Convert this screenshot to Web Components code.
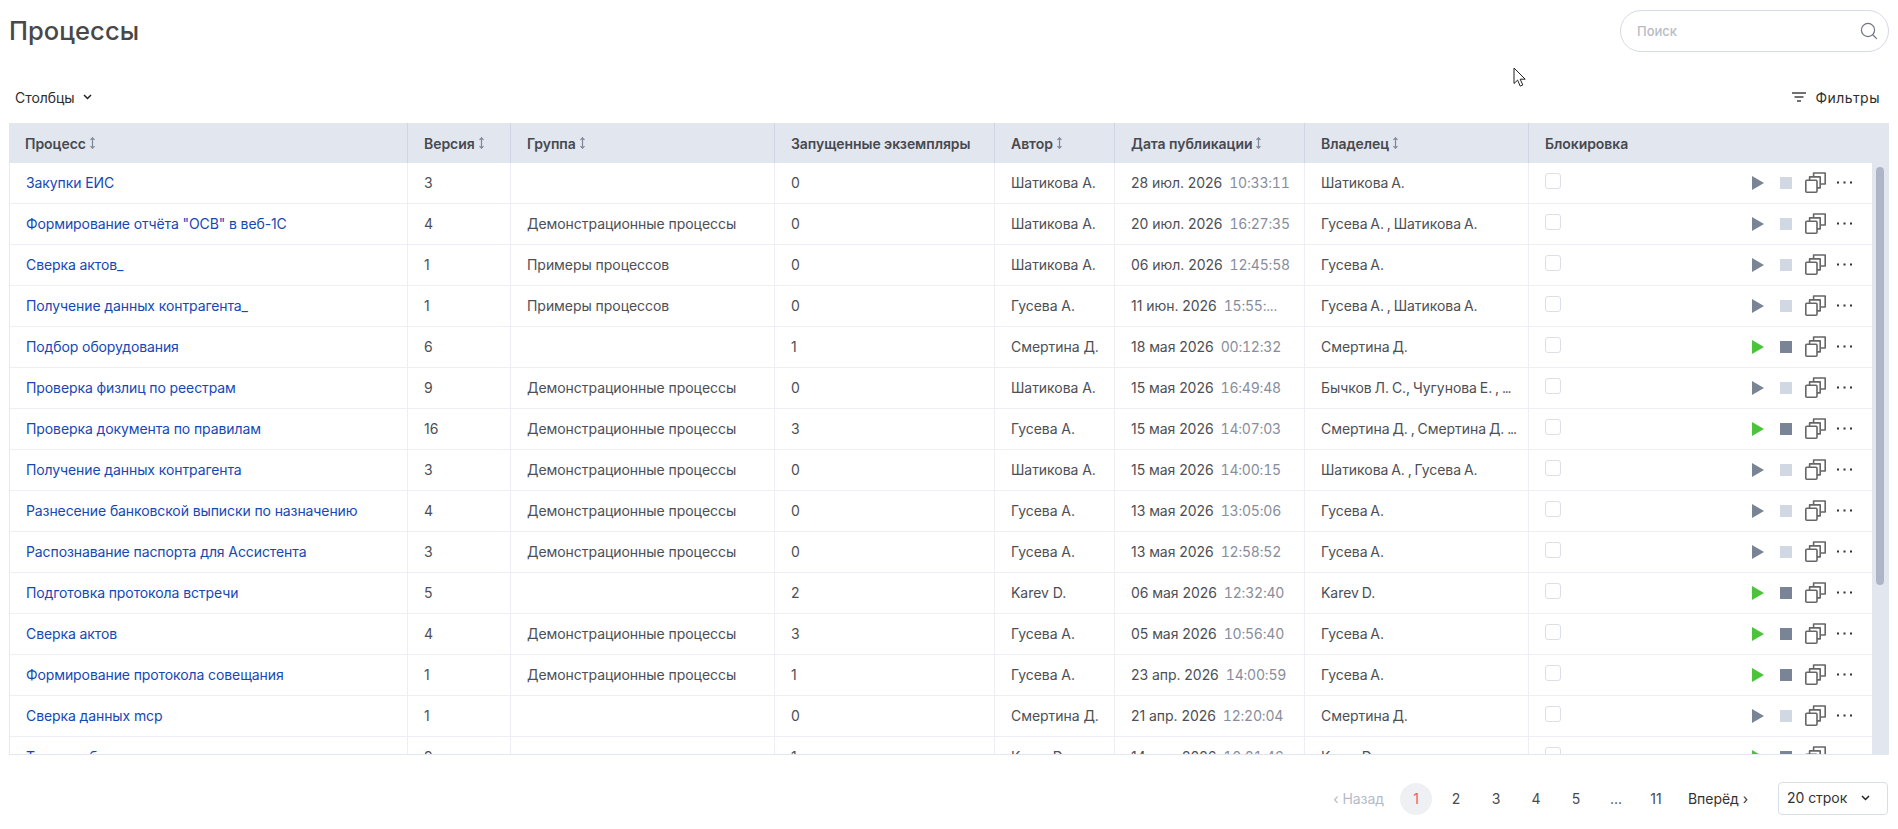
<!DOCTYPE html>
<html lang="ru"><head><meta charset="utf-8"><title>Процессы</title>
<style>
html,body{margin:0;padding:0;background:#fff;height:100%;overflow:hidden}
body{font-family:Inter,"Noto Sans",sans-serif;font-size:14px;color:#4a4a4a}
</style></head><body>
<process-app></process-app>
<script>
const ICON = {
 search:`<svg width="18" height="18" viewBox="0 0 18 18" fill="none" stroke="#6f7480" stroke-width="1.2"><circle cx="8" cy="8" r="6.6"/><path d="M13 13l3.6 3.6" stroke-linecap="round"/></svg>`,
 chev:`<svg width="9" height="6" viewBox="0 0 9 6" fill="none" stroke="#222" stroke-width="1.5"><path d="M1 1l3.5 3.5L8 1"/></svg>`,
 filter:`<svg width="14" height="10" viewBox="0 0 14 10" fill="none" stroke="#444" stroke-width="1.3"><path d="M0 1h14M2.5 5h9M5 9h4"/></svg>`,
 sort:`<svg width="7" height="12" viewBox="0 0 7 12" fill="none" stroke="#808898" stroke-width="1.2"><path d="M3.5 1v10M1.5 2.8L3.5 .8l2 2M1.5 9.2l2 2 2-2"/></svg>`,
 copy:`<svg width="21" height="21" viewBox="0 0 21 21" fill="none" stroke="#666" stroke-width="1.6" stroke-linejoin="round"><rect x=".8" y="8.2" width="11.2" height="12" rx="1"/><path d="M4.6 8V4.9h10.6v11H12"/><path d="M8.6 4.7V1h11.6v11h-5"/></svg>`,
 dots:`<svg width="15" height="3" viewBox="0 0 15 3" fill="#333"><rect x="0" y=".5" width="2" height="2"/><rect x="6.5" y=".5" width="2" height="2"/><rect x="13" y=".5" width="2" height="2"/></svg>`,
 cursor:`<svg width="14" height="21" viewBox="0 0 14 21"><path d="M1 1v15.5l3.6-3.4 2.6 6 2.6-1.1-2.6-5.8h5z" fill="#fff" stroke="#222" stroke-width="1" stroke-linejoin="round"/></svg>`
};
const TAIL = '103px 264px 220px 120px 190px 224px 1fr';

function def(name, css, html){
  customElements.define(name, class extends HTMLElement{
    constructor(){super();const r=this.attachShadow({mode:'open'});r.innerHTML=`<style>${css}</style>${typeof html==='function'?html(this):html}`;}
  });
}

def('page-header',`
 :host{display:flex;align-items:center;justify-content:space-between;padding:10px 9px 0 9px}
 h1{margin:0;font-size:25.5px;line-height:42px;font-weight:550;color:#484848;letter-spacing:.05px}
`,`<h1>Процессы</h1><slot></slot>`);

def('search-box',`
 :host{display:flex;align-items:center;justify-content:space-between;box-sizing:border-box;width:269px;height:42px;border:1px solid #d5dae6;border-radius:21px;padding:0 10px 0 16px;color:#b9bcc4;font-size:13px;font-weight:500}
 svg{display:block}
`,`<span>Поиск</span>${ICON.search}`);

def('table-toolbar',`
 :host{display:flex;align-items:center;justify-content:space-between;height:30px;margin:30px 0 11px;padding:0 18px 0 15px;color:#2e2e2e;font-size:14px;letter-spacing:-.05px}
 div{display:flex;align-items:center}
 .c{gap:8px}.f{gap:9px;letter-spacing:.5px}
`,`<div class="c"><span>Столбцы</span>${ICON.chev}</div><div class="f">${ICON.filter}<span>Фильтры</span></div>`);

def('table-head',`
 :host{display:grid;grid-template-columns:399px ${TAIL};height:40px;background:#e2e6ef;font-size:14px;letter-spacing:-.05px;font-weight:600;color:#474a50}
 div{display:flex;align-items:center;gap:3px;padding-left:16px;border-right:1px solid #cfd5e2;box-sizing:border-box;white-space:nowrap}
 div:first-child{padding-left:18px}
 div:last-child{border:0}
`,`<div>Процесс ${ICON.sort}</div><div>Версия ${ICON.sort}</div><div>Группа ${ICON.sort}</div><div>Запущенные экземпляры</div><div>Автор ${ICON.sort}</div><div>Дата публикации ${ICON.sort}</div><div>Владелец ${ICON.sort}</div><div>Блокировка</div>`);

def('row-actions',`
 :host{display:flex;align-items:center;margin-left:auto;padding-right:20px}
 .p{width:0;height:0;border-left:12px solid #7a8497;border-top:7px solid transparent;border-bottom:7px solid transparent;margin-right:16px}
 .s{width:12px;height:12px;background:#d2d8e3;margin-right:13px}
 :host([active]) .p{border-left-color:#4bc43c}
 :host([active]) .s{background:#7a8497}
 .c{display:block;width:21px;height:21px;margin-right:11px}
 .d{display:block;width:15px;height:3px}
 svg{display:block}
`,`<span class="p"></span><span class="s"></span><span class="c">${ICON.copy}</span><span class="d">${ICON.dots}</span>`);

def('process-row',`
 :host{display:grid;grid-template-columns:398px ${TAIL};height:41px;box-sizing:border-box;border-bottom:1px solid #eeeff4;font-size:14px;letter-spacing:-.05px;color:#4d4f55;flex:none}
 .x{display:flex;align-items:center;padding:0 8px 2px 16px;border-right:1px solid #eeeff4;box-sizing:border-box;white-space:nowrap;overflow:hidden;min-width:0}
 .x:last-child{border:0;padding:0 0 1px 16px}
 a{color:#1548b6;text-decoration:none;letter-spacing:-.1px}
 .t{color:#878d9c;margin-left:7px;font-variant-numeric:tabular-nums;letter-spacing:-.2px}
 .o{word-spacing:-1px}
 .cb{width:16px;height:16px;box-sizing:border-box;border:1px solid #dcdfe5;border-radius:3px;margin-top:-3px;flex:none}
`,h=>{
 const [name,ver,group,inst,author,date,time,owner]=JSON.parse(h.getAttribute('data'));
 const own=owner.replace(/ \.\.\.$/,' <span style="letter-spacing:-1.2px">...</span>');
 return `<div class="x"><a href="#">${name}</a></div><div class="x">${ver}</div><div class="x">${group}</div><div class="x">${inst}</div><div class="x">${author}</div><div class="x"><span>${date}</span><span class="t">${time}</span></div><div class="x"><span class="o">${own}</span></div><div class="x"><span class="cb"></span><row-actions ${+inst>0?'active':''}></row-actions></div>`;
});

def('scroll-track',`
 :host{display:block;flex:none;width:17px;background:#e2e6ef;padding:4px 5px 0 4px;box-sizing:border-box}
 i{display:block;width:8px;height:418px;border-radius:4px;background:#adb5c7}
`,`<i></i>`);

def('process-table',`
 :host{display:block;height:632px;margin:0 9px;border-bottom:1px solid #e2e6ef;overflow:hidden;box-sizing:border-box}
 .b{display:flex;height:591px;overflow:hidden;border-left:1px solid #e8eaf2}
 .r{flex:1;min-width:0;display:flex;flex-direction:column;overflow:hidden}
`,`<table-head></table-head><div class="b"><div class="r"><slot></slot></div><scroll-track></scroll-track></div>`);

def('pager-bar',`
 :host{display:flex;align-items:center;justify-content:flex-end;margin-top:27px;padding-right:10px;font-size:14px;letter-spacing:-.05px;color:#474a50;height:33px}
 span{display:flex;align-items:center;justify-content:center;box-sizing:border-box;flex:none}
 .prev{gap:5px;color:#b5bbc7;margin-right:16px}
 .n{width:32px;height:32px;margin-right:8px;border-radius:50%}
 .a{background:#eff0f3;color:#ec5b6b}
 .next{gap:5px;color:#333;margin:0 30px 0 8px}
 .sel{width:110px;height:33px;border:1px solid #d9dde6;border-radius:4px;justify-content:space-between;padding:0 17px 2px 8px;color:#333}
`,`<span class="prev">‹ Назад</span><span class="n a">1</span><span class="n">2</span><span class="n">3</span><span class="n">4</span><span class="n">5</span><span class="n">...</span><span class="n">11</span><span class="next">Вперёд ›</span><span class="sel">20 строк ${ICON.chev}</span>`);

def('cursor-mark',`
 :host{position:absolute;left:1513px;top:67px;width:14px;height:21px}
 svg{display:block}
`,ICON.cursor);

const ROWS=[
["Закупки ЕИС","3","","0","Шатикова А.","28 июл. 2026","10:33:11","Шатикова А."],
["Формирование отчёта \"ОСВ\" в веб-1С","4","Демонстрационные процессы","0","Шатикова А.","20 июл. 2026","16:27:35","Гусева А. , Шатикова А."],
["Сверка актов_","1","Примеры процессов","0","Шатикова А.","06 июл. 2026","12:45:58","Гусева А."],
["Получение данных контрагента_","1","Примеры процессов","0","Гусева А.","11 июн. 2026","15:55:...","Гусева А. , Шатикова А."],
["Подбор оборудования","6","","1","Смертина Д.","18 мая 2026","00:12:32","Смертина Д."],
["Проверка физлиц по реестрам","9","Демонстрационные процессы","0","Шатикова А.","15 мая 2026","16:49:48","Бычков Л. С., Чугунова Е. , ..."],
["Проверка документа по правилам","16","Демонстрационные процессы","3","Гусева А.","15 мая 2026","14:07:03","Смертина Д. , Смертина Д. ..."],
["Получение данных контрагента","3","Демонстрационные процессы","0","Шатикова А.","15 мая 2026","14:00:15","Шатикова А. , Гусева А."],
["Разнесение банковской выписки по назначению","4","Демонстрационные процессы","0","Гусева А.","13 мая 2026","13:05:06","Гусева А."],
["Распознавание паспорта для Ассистента","3","Демонстрационные процессы","0","Гусева А.","13 мая 2026","12:58:52","Гусева А."],
["Подготовка протокола встречи","5","","2","Karev D.","06 мая 2026","12:32:40","Karev D."],
["Сверка актов","4","Демонстрационные процессы","3","Гусева А.","05 мая 2026","10:56:40","Гусева А."],
["Формирование протокола совещания","1","Демонстрационные процессы","1","Гусева А.","23 апр. 2026","14:00:59","Гусева А."],
["Сверка данных mcp","1","","0","Смертина Д.","21 апр. 2026","12:20:04","Смертина Д."],
["Тендеры банка","9","","1","Karev D.","14 апр. 2026","10:01:46","Karev D."]
];
const esc=s=>s.replace(/&/g,'&amp;').replace(/'/g,'&#39;');
const rowsHtml=ROWS.map(r=>`<process-row data='${esc(JSON.stringify(r))}'></process-row>`).join('');

def('process-app',`:host{display:block;position:relative;height:829px;overflow:hidden}`,
 `<page-header><search-box></search-box></page-header><table-toolbar></table-toolbar><process-table>${rowsHtml}</process-table><pager-bar></pager-bar><cursor-mark></cursor-mark>`);
</script>
</body></html>
